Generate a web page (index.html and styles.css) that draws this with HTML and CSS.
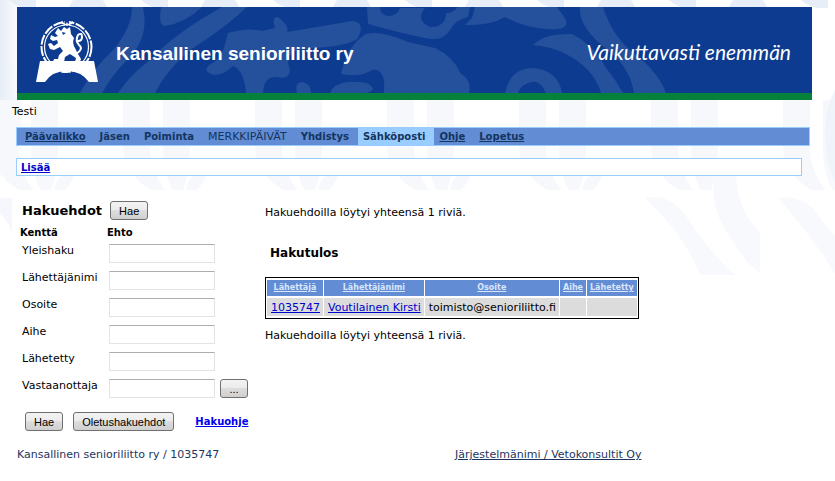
FILE: index.html
```
<!DOCTYPE html>
<html lang="fi">
<head>
  <meta charset="UTF-8" />
  <meta name="viewport" content="width=device-width, initial-scale=1.0" />
  <title>Kansallinen senioriliitto ry</title>
  <link rel="stylesheet" href="styles.css">
</head>
<body>
  <svg class="backdrop" aria-hidden="true">
    <defs>
      <linearGradient id="edge"><stop offset="0" stop-color="#e6ecf6" /><stop offset="1" stop-color="#fff" /></linearGradient>
      <linearGradient id="fade" x2="0" y2="1"><stop offset="0" stop-color="#e6ecf6" stop-opacity="0" /><stop offset="1" stop-color="#fff" /></linearGradient>
      <pattern id="stripes" width="132" height="192" patternUnits="userSpaceOnUse" x="123">
        <path d="M18 0 H45 V8 H34 Q24 6 18 0 Z M82 0 H112 L117 8 H77 Z" fill="#e8eef7" />
        <path d="M0 100 H27 V150 Q28 172 42 190 H28 Q4 176 0 150 Z M40 100 H67 V150 Q66 174 60 190 H50 Q40 174 40 150 Z M86 158 Q86 178 74 190 H64 Q62 184 72 174 Z" fill="#f6f8fc" />
      </pattern>
    </defs>
    <rect width="22" height="180" fill="url(#edge)" />
    <rect y="60" width="22" height="120" fill="url(#fade)" />
    <rect width="100%" height="192" fill="url(#stripes)" />
    <path d="M0 198 H12 V232 Q6 218 0 214 Z" fill="#f6f7fc" />
    <path d="M645 198 Q672 192 690 222 Q708 250 735 275 H700 Q685 235 645 198 Z M714 175 H736 Q738 212 760 232 V273 Q744 262 732 240 Q710 212 714 175 Z M778 198 Q806 194 820 218 L835 236 V274 Q812 236 778 198 Z" fill="#f8f9fc" />
    <path d="M835 90 Q818 120 830 170 L835 182 Z" fill="#eff3fa" />
  </svg>

  <header class="banner">
    <svg class="banner-art" viewBox="17 7 795 86" preserveAspectRatio="xMinYMin slice" aria-hidden="true">
      <path d="M132 7 H143 Q150 38 127 60 Q112 75 102 93 H80 Q92 70 113 50 Q132 28 132 7 Z" />
      <path d="M161 7 Q158 26 165 26 Q185 23 202 7 Z" />
      <path d="M222 7 Q175 33 150 60 Q130 75 118 93 H155 Q165 72 190 50 Q225 28 247 7 Z" />
      <path d="M228 33 Q245 27 262 31 L275 28 Q271 17 278 17 Q290 26 287 32 L352 21 Q366 22 358 38 Q350 45 325 47 L298 50 Q284 54 290 70 Q290 80 276 77 Q264 76 263 93 H246 Q244 70 233 66 Q224 75 214 75 Q202 72 209 65 Q220 60 224 48 Z" />
      <path d="M367 7 L368 24 Q400 33 425 38 Q443 42 450 30 Q455 20 468 17 L470 7 H458 Q453 13 446 13 Q446 27 430 27 Q415 20 425 8 H400 Q397 16 388 16 Q380 15 380 7 Z" />
      <path d="M475 7 L472 18 L465 25 Q490 26 505 17 Q530 31 558 29 Q570 28 565 18 L557 7 Z" />
      <path d="M341 74 Q347 45 366 34 Q380 30 408 42 L435 48 Q453 56 461 74 Q472 80 469 93 H384 Q386 68 372 70 Q360 78 341 74 Z" />
      <path d="M330 93 Q333 84 347 82 Q371 80 373 89 Q371 92 366 93 Z M297 93 Q294 82 303 82 Q311 84 311 93 Z" />
      <path d="M533 45 Q545 33 572 34 Q594 45 606 68 Q616 80 623 93 H601 Q594 68 564 53 Q552 47 533 45 Z" />
      <path d="M580 7 H603 Q613 38 635 54 Q659 73 666 93 H634 Q630 68 610 52 Q578 28 580 7 Z" />
      <path d="M505 93 Q510 68 533 68 Q558 70 562 93 H546 Q540 80 532 82 Q521 84 518 93 Z" />
    </svg>
    <svg class="logo" width="62" height="64" viewBox="0 0 62 64" role="img" aria-label="Leijona">
      <g fill="none" stroke="#fff">
        <circle cx="30.500" cy="28" r="25" stroke-width="2" stroke-dasharray="10 1.500" />
        <circle cx="30.500" cy="28" r="22" stroke-width="1.200" />
        <path d="M40 35 Q48 30 43 26 Q39 22 42 16 Q46 13 46 18 Q46 22 42 22" stroke-width="2" />
      </g>
      <path d="M29 0 H33 V8 H29 Z" fill="#0c3b90" />
      <path d="M25 2 L30 5 L31 3 L32 5 L37 2 L36 5 L31 7 L26 5 Z" fill="#fff" />
      <path d="M22 9 L25 12 L28 8 L31 10 L34 8 L35 15 L38 19 Q36 24 39 29 L42 35 L45 40 L44 43 H39 L40 39 L34 35 L29 38 L28 43 H17 L18 40 L22 40 L23 36 L27 32 L24 28 L18 31 L14 30 L12 25 L15 24 L18 27 L22 24 L21 21 L17 22 L14 20 L15 16 L19 18 L22 17 L19 14 Z" fill="#fff" />
      <path d="M26 13 L30 14 L27 16 Z" fill="#0c3b90" />
      <path d="M4 42 H58 L62 63 H53 Q45 52 31 52 Q16 52 9 63 H0 Z" fill="#fff" />
    </svg>
    <h1>Kansallinen senioriliitto ry</h1>
    <p class="slogan">Vaikuttavasti enemmän</p>
  </header>

  <p class="user">Testi</p>

  <nav class="menu">
    <a class="link" href="#">Päävalikko</a>
    <a href="#">Jäsen</a>
    <a href="#">Poiminta</a>
    <a class="plain" href="#">MERKKIPÄIVÄT</a>
    <a href="#">Yhdistys</a>
    <a class="active" href="#">Sähköposti</a>
    <a class="link" href="#">Ohje</a>
    <a class="link" href="#">Lopetus</a>
  </nav>

  <div class="submenu"><a href="#">Lisää</a></div>

  <main>
    <form class="search">
      <div class="search-head">
        <h2>Hakuehdot</h2>
        <button type="button">Hae</button>
      </div>
      <div class="columns"><b>Kenttä</b><b>Ehto</b></div>
      <div class="row"><label for="yleishaku">Yleishaku</label><input type="text" id="yleishaku" /></div>
      <div class="row"><label for="nimi">Lähettäjänimi</label><input type="text" id="nimi" /></div>
      <div class="row"><label for="osoite">Osoite</label><input type="text" id="osoite" /></div>
      <div class="row"><label for="aihe">Aihe</label><input type="text" id="aihe" /></div>
      <div class="row"><label for="lahetetty">Lähetetty</label><input type="text" id="lahetetty" /></div>
      <div class="row"><label for="vastaanottaja">Vastaanottaja</label><input type="text" id="vastaanottaja" /><button type="button" class="pick">...</button></div>
      <div class="actions">
        <button type="button">Hae</button>
        <button type="button">Oletushakuehdot</button>
        <a href="#">Hakuohje</a>
      </div>
    </form>

    <section class="results">
      <p>Hakuehdoilla löytyi yhteensä 1 riviä.</p>
      <h2>Hakutulos</h2>
      <table>
        <thead>
          <tr>
            <th><a href="#">Lähettäjä</a></th>
            <th><a href="#">Lähettäjänimi</a></th>
            <th><a href="#">Osoite</a></th>
            <th><a href="#">Aihe</a></th>
            <th><a href="#">Lähetetty</a></th>
          </tr>
        </thead>
        <tbody>
          <tr>
            <td><a href="#">1035747</a></td>
            <td><a href="#">Voutilainen Kirsti</a></td>
            <td>toimisto@senioriliitto.fi</td>
            <td></td>
            <td></td>
          </tr>
        </tbody>
      </table>
      <p>Hakuehdoilla löytyi yhteensä 1 riviä.</p>
    </section>
  </main>

  <footer>
    <span>Kansallinen senioriliitto ry / 1035747</span>
    <a href="#">Järjestelmänimi / Vetokonsultit Oy</a>
  </footer>
</body>
</html>
```
FILE: styles.css
```
* {
  box-sizing: border-box;
}
body {
  position: relative;
  margin: 0;
  padding: 7px 23px 16px 16px;
  background: #fff;
  color: #000;
  font-family: Verdana, "DejaVu Sans", sans-serif;
  font-size: 11px;
  line-height: 14px;
}
h1, h2, p {
  margin: 0;
}
a {
  color: #0000cc;
}
.backdrop {
  position: absolute;
  top: 0;
  left: 0;
  z-index: -1;
  width: 100%;
  height: 280px;
}

/* banner */
.banner {
  position: relative;
  display: flex;
  align-items: center;
  height: 93px;
  margin-left: 1px;
  padding: 0 21px 0 19px;
  border-bottom: 7px solid #06813c;
  background: #0c3b90;
  color: #fff;
}
.banner-art {
  position: absolute;
  top: 0;
  left: 0;
  width: 100%;
  height: 100%;
  fill: #25509b;
}
.logo, .banner h1, .slogan {
  position: relative;
}
.logo {
  margin-top: 2px;
}
.banner h1 {
  margin-left: 18px;
  padding-top: 8px;
  font: bold 19px/24px Arial, "Liberation Sans", sans-serif;
}
.slogan {
  margin-left: auto;
  padding-top: 4px;
  font: italic 21px/24px "Segoe Print", Lato, sans-serif;
}
.user {
  margin: 5px 0 8px -4px;
}

/* menus */
.menu {
  display: flex;
  margin-right: 2px;
  padding-left: 3px;
  border: 1px solid #99ccff;
  background: #628cd4;
}
.menu a {
  padding: 1px 9px 0 5px;
  line-height: 16px;
  color: #133560;
  font-size: 10px;
  font-weight: bold;
  text-decoration: none;
}
.menu .link {
  text-decoration: underline;
}
.menu .plain {
  font-size: 11px;
  font-weight: normal;
}
.menu .active {
  background: #99ccff;
}
.submenu {
  margin: 12px 10px 0 0;
  padding: 1px 4px 0;
  border: 1px solid #99ccff;
  background: #fff;
  font-size: 10px;
  line-height: 15px;
  font-weight: bold;
}

/* search form */
main {
  display: flex;
  align-items: flex-start;
  margin-top: 25px;
}
.search {
  flex: none;
  width: 249px;
}
.search-head {
  display: flex;
  align-items: center;
  gap: 8px;
  padding-left: 6px;
}
h2 {
  font-size: 13px;
  line-height: 18px;
}
button {
  height: 19px;
  padding: 0 8px;
  border: 1px solid #707070;
  border-radius: 3px;
  background: linear-gradient(#f3f3f3, #ebebeb 50%, #dddddd 50%, #cfcfcf);
  color: #000;
  font: 11px/16px Tahoma, "Liberation Sans", sans-serif;
}
.columns {
  display: grid;
  grid-template-columns: 87px 1fr;
  margin: 6px 0 4px;
  padding-left: 4px;
  font-size: 10px;
}
.row {
  display: flex;
  align-items: flex-start;
  height: 27px;
  padding-left: 6px;
}
.row label {
  width: 87px;
}
.row input {
  width: 106px;
  height: 19px;
  padding: 1px 2px;
  border: 1px solid #e3e3e3;
  border-top-color: #abadb3;
  background: #fff;
  font: inherit;
}
.pick {
  width: 28px;
  margin-left: 5px;
}
.actions {
  display: flex;
  align-items: center;
  margin-top: 6px;
  padding-left: 9px;
}
.actions button {
  margin-right: 10px;
}
.actions a {
  margin-left: 11px;
  color: #0000ee;
  font-size: 10px;
  font-weight: bold;
}

/* results */
.results {
  padding-top: 5px;
}
.results h2 {
  margin: 24px 0 15px 5px;
  font-size: 12px;
}
table {
  margin-bottom: 10px;
  border: 1px solid #000;
  border-spacing: 1px 2px;
  background: #fff;
}
th {
  height: 16px;
  padding: 0 3px;
  background: #628cd4;
  font-size: 8px;
  line-height: 12px;
}
th a {
  color: #d9e6fb;
}
td {
  height: 18px;
  padding: 1px 3px 0 4px;
  background: #dcdcdc;
}

footer {
  display: flex;
  margin-top: 17px;
  padding-left: 1px;
  color: #1c3660;
}
footer span {
  width: 438px;
}
footer a {
  color: inherit;
}
```
